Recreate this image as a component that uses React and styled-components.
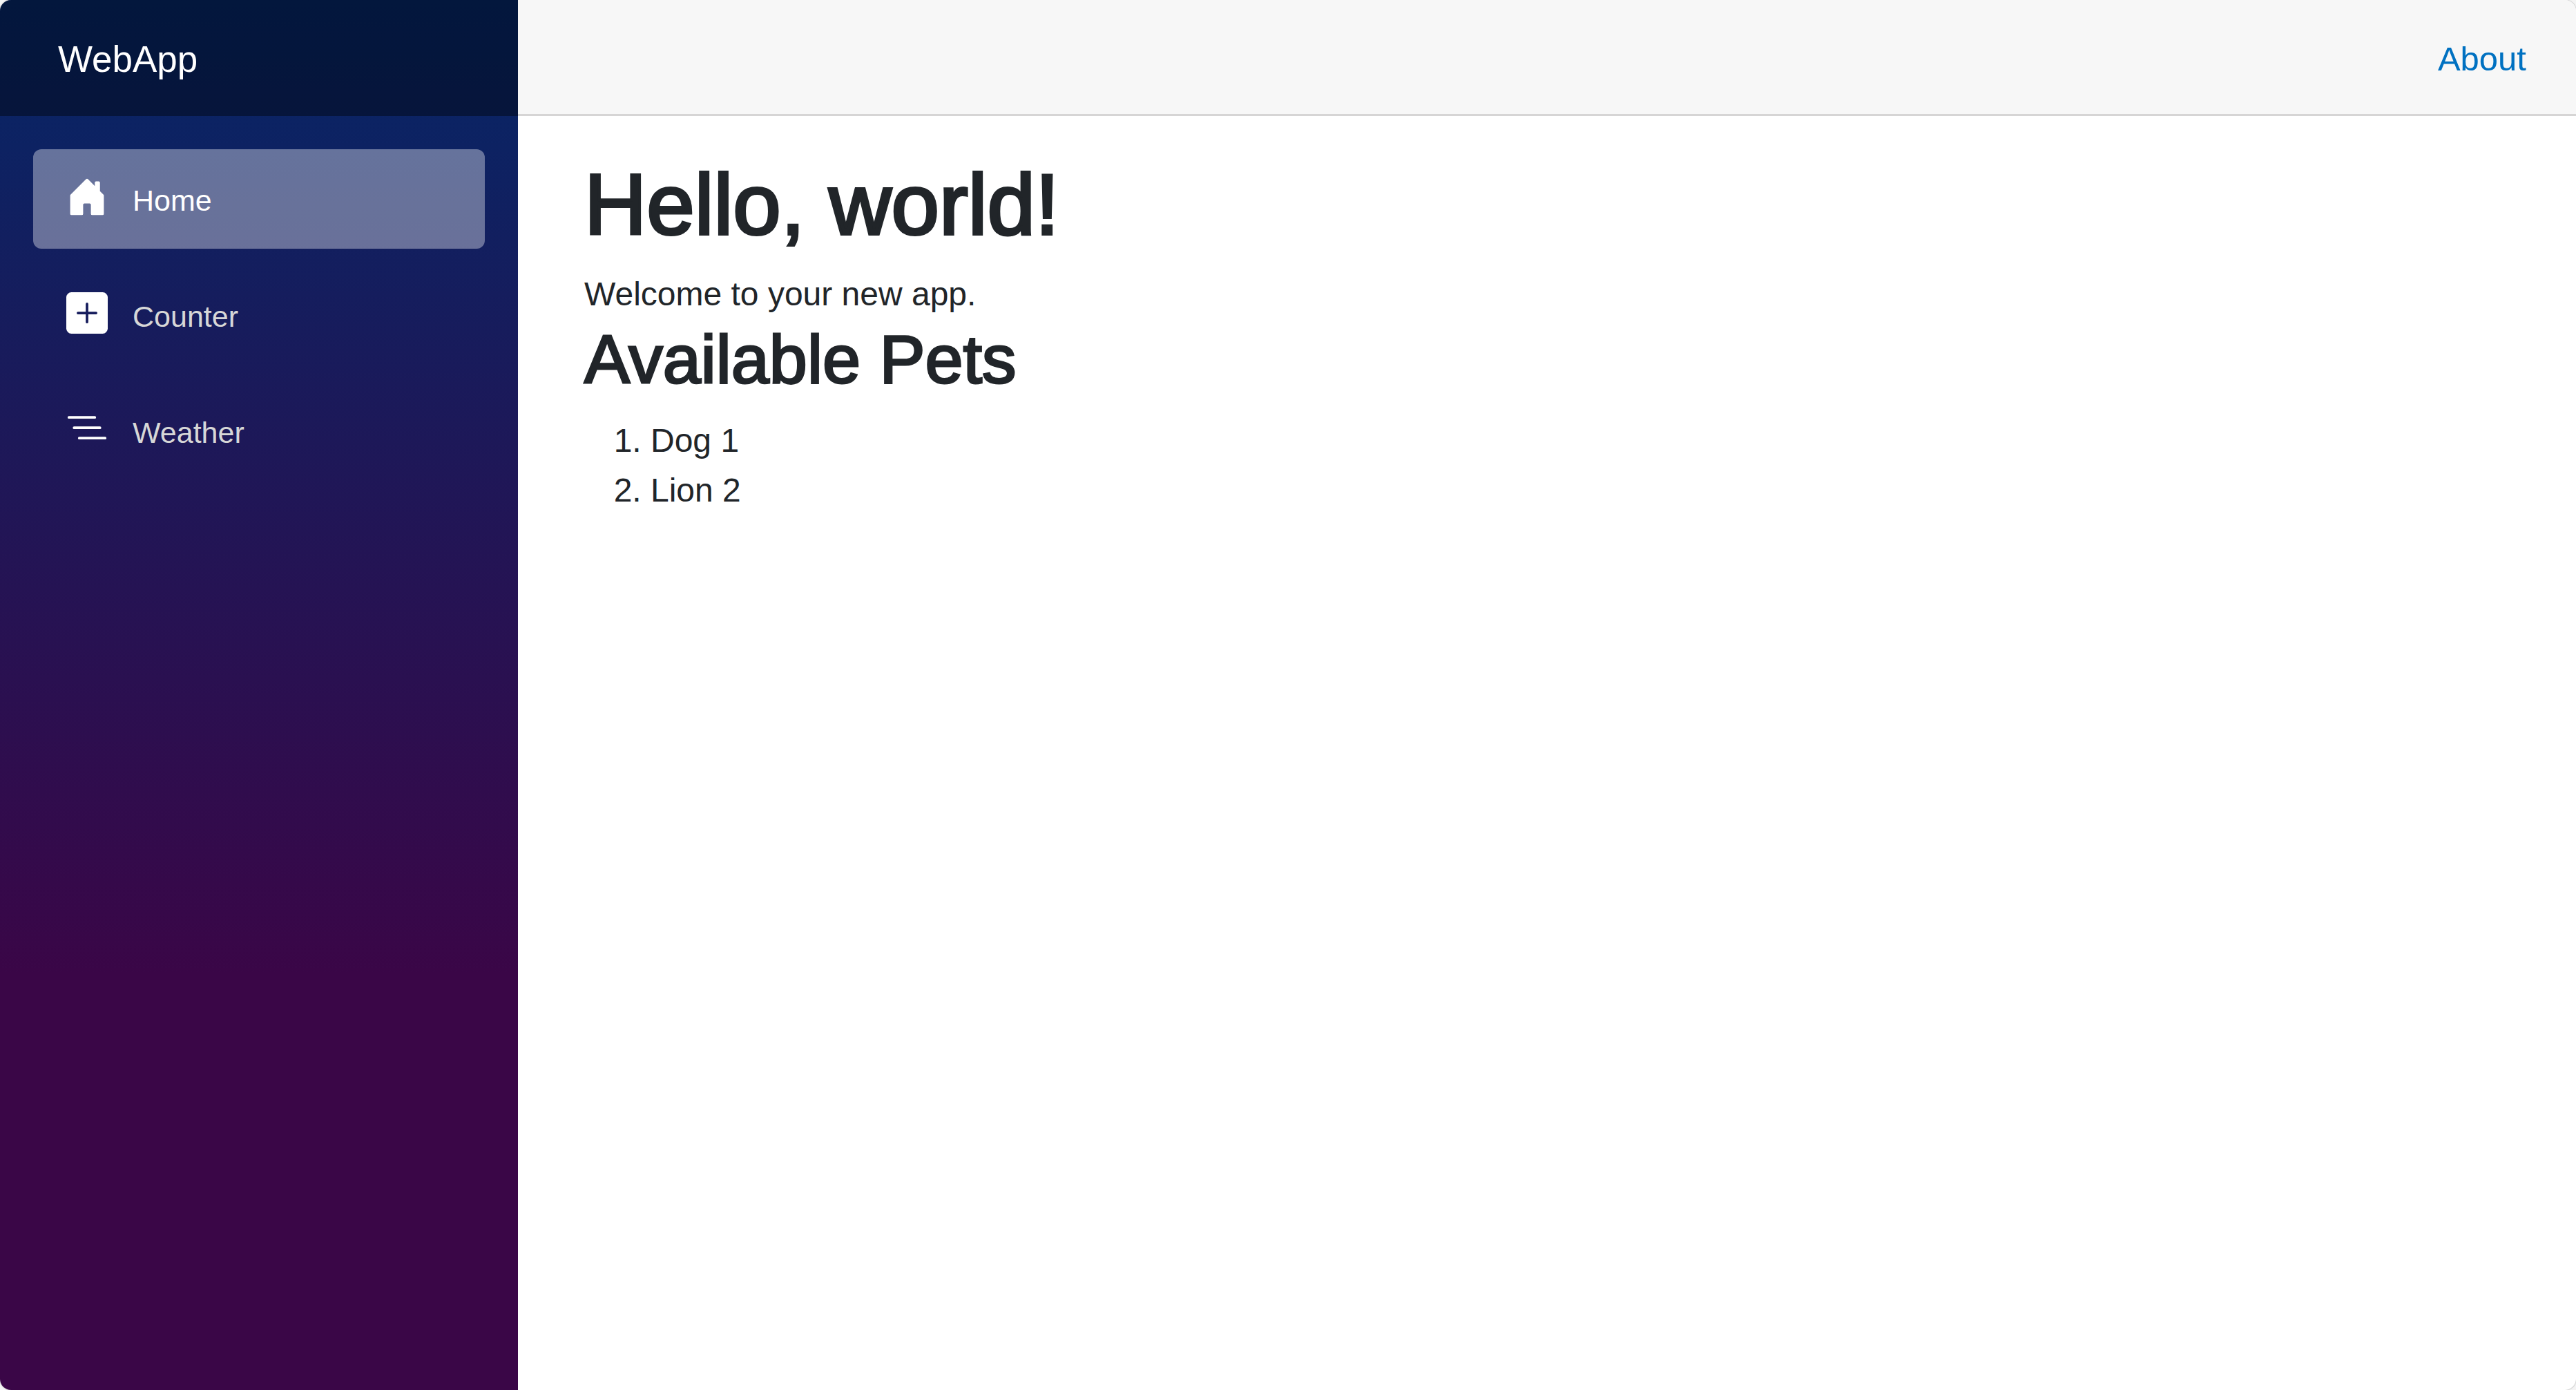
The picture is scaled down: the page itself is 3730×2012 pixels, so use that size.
import React from "react";
import styled, { createGlobalStyle } from "styled-components";
import { BsHouseDoorFill, BsListNested, BsPlusSquareFill } from "react-icons/bs";

const GlobalStyle = createGlobalStyle`
  *, *::before, *::after { box-sizing: border-box; }
  body {
    margin: 0;
    background: #f4f4f4;
    color: #212529;
    font: 400 48px/72px "Helvetica Neue", "Liberation Sans", Arial, sans-serif;
  }
`;

const Page = styled.div`
  display: flex;
  min-height: 100vh;
  border-radius: 16px;
  overflow: hidden;
  background: #fff;
  box-shadow: 0 0 2px rgba(0, 0, 0, 0.4);
`;

const Sidebar = styled.aside`
  flex: 0 0 750px;
  background: linear-gradient(180deg, rgb(5, 39, 103) 0%, #3a0647 70%);
`;

const BrandBar = styled.div`
  display: flex;
  align-items: center;
  height: 168px;
  padding: 4px 84px 0;
  background: rgba(0, 0, 0, 0.4);
`;

const Brand = styled.a`
  color: #fff;
  font-size: 53px;
  text-decoration: none;
`;

const Nav = styled.nav`
  display: flex;
  flex-direction: column;
  gap: 24px;
  padding: 48px;
`;

const NavItem = styled.a`
  display: flex;
  align-items: center;
  gap: 36px;
  height: 144px;
  padding: 4px 48px 0;
  border-radius: 12px;
  background: ${({ $active }) => ($active ? "rgba(255, 255, 255, 0.37)" : "transparent")};
  color: ${({ $active }) => ($active ? "#fff" : "#d7d7d7")};
  font-size: 43px;
  text-decoration: none;

  svg {
    flex: none;
    width: 60px;
    height: 60px;
    margin-bottom: 10px;
    color: #fff;
  }
`;

const Main = styled.main`
  flex: 1;
  min-width: 0;
`;

const TopBar = styled.header`
  display: flex;
  align-items: center;
  justify-content: flex-end;
  height: 168px;
  padding: 4px 72px 0;
  background: #f7f7f7;
  border-bottom: 3px solid #d6d5d5;
`;

const TopLink = styled.a`
  color: #0071c1;
  font-size: 49px;
  text-decoration: none;
`;

const Content = styled.article`
  padding: 56px 72px 56px 96px;
`;

const Title = styled.h1`
  margin: 0 0 22px;
  font-size: 125px;
  font-weight: 400;
  line-height: 144px;
  -webkit-text-stroke: 4px currentColor;
`;

const Subtitle = styled.h2`
  margin: 0 0 24px;
  font-size: 99px;
  font-weight: 400;
  line-height: 116px;
  -webkit-text-stroke: 3px currentColor;
`;

const Paragraph = styled.p`
  margin: 0;
`;

const PetList = styled.ol`
  margin: 0;
  padding-left: 96px;
`;

const links = [
  { label: "Home", Icon: BsHouseDoorFill, active: true },
  { label: "Counter", Icon: BsPlusSquareFill },
  { label: "Weather", Icon: BsListNested },
];

const pets = ["Dog 1", "Lion 2"];

export default function App() {
  return (
    <>
      <GlobalStyle />
      <Page>
        <Sidebar>
          <BrandBar>
            <Brand href="#">WebApp</Brand>
          </BrandBar>
          <Nav>
            {links.map(({ label, Icon, active }) => (
              <NavItem
                key={label}
                href={`#${label.toLowerCase()}`}
                $active={active}
                aria-current={active ? "page" : undefined}
              >
                <Icon aria-hidden="true" />
                {label}
              </NavItem>
            ))}
          </Nav>
        </Sidebar>
        <Main>
          <TopBar>
            <TopLink href="#about">About</TopLink>
          </TopBar>
          <Content>
            <Title>Hello, world!</Title>
            <Paragraph>Welcome to your new app.</Paragraph>
            <Subtitle>Available Pets</Subtitle>
            <PetList>
              {pets.map((pet) => (
                <li key={pet}>{pet}</li>
              ))}
            </PetList>
          </Content>
        </Main>
      </Page>
    </>
  );
}
